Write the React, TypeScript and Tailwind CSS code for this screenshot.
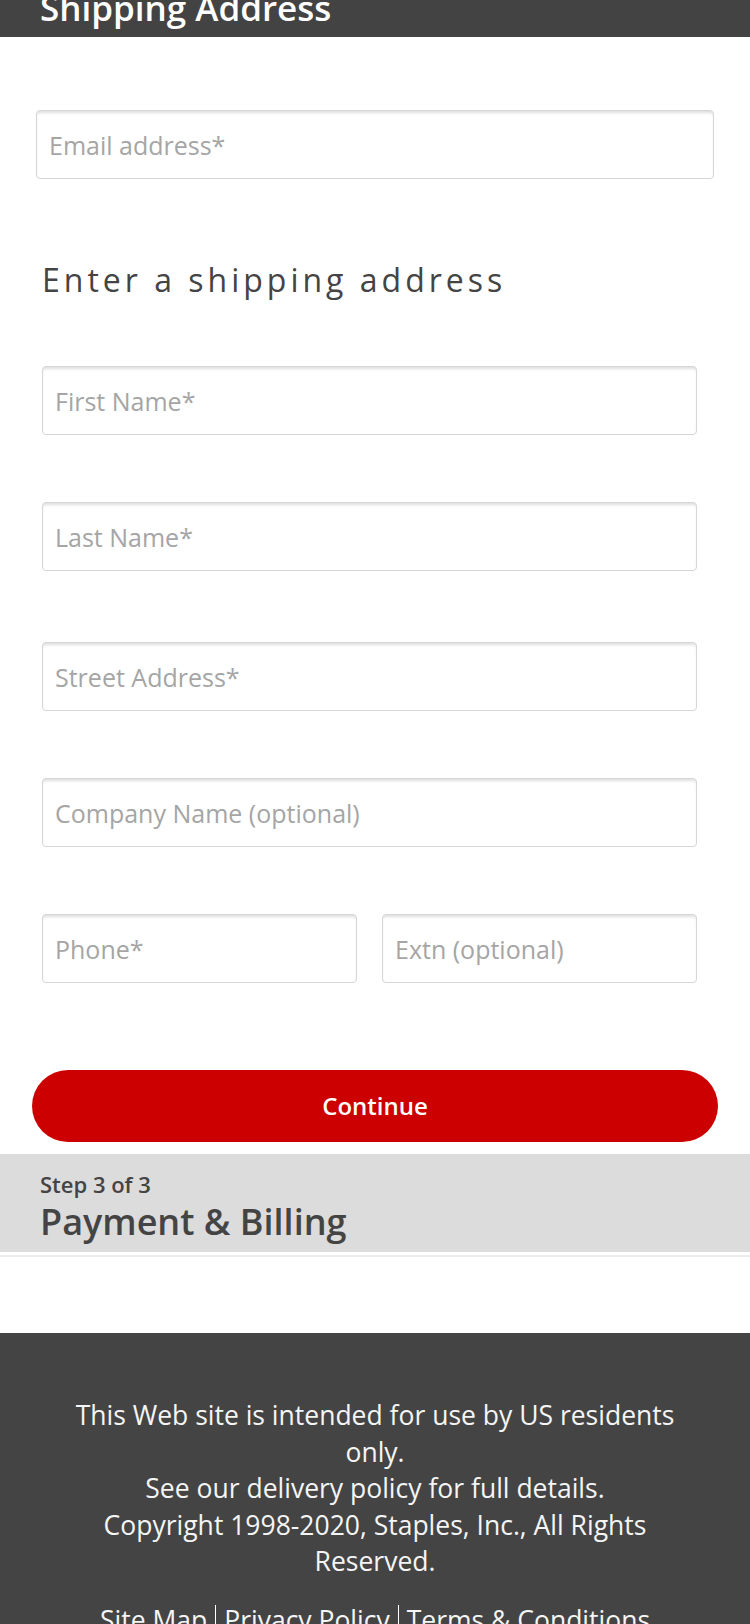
const font = { fontFamily: '"Open Sans", "Noto Sans", sans-serif' };

const Field = ({ placeholder, className = "" }: { placeholder: string; className?: string }) => (
  <input
    placeholder={placeholder}
    className={`h-[69px] w-full rounded-[4px] border border-[#d6d6d6] bg-white px-3 text-[25px] text-[#333] placeholder:text-[#a5a5a5] shadow-[inset_0_3px_3px_-1px_rgba(0,0,0,0.13)] outline-none ${className}`}
  />
);

export default function App() {
  return (
    <div className="w-[750px] min-h-[1624px] bg-white" style={font}>
      <div className="h-[37px] overflow-hidden bg-[#434343] px-[40px]">
        <h1 className="mt-[-10px] text-[35px] leading-none font-semibold text-white">Shipping Address</h1>
      </div>

      <div className="px-[36px] pt-[73px]">
        <Field placeholder="Email address*" />
      </div>

      <div className="pl-[42px] pr-[53px]">
        <h2 className="mt-[81px] text-[32px] leading-[40px] tracking-[4px] text-[#444]">Enter a shipping address</h2>
        <div className="mt-[66px] flex flex-col gap-[67px]">
          <Field placeholder="First Name*" />
          <Field placeholder="Last Name*" className="mb-[4px]" />
          <Field placeholder="Street Address*" />
          <Field placeholder="Company Name (optional)" />
          <div className="grid grid-cols-2 gap-[25px]">
            <Field placeholder="Phone*" />
            <Field placeholder="Extn (optional)" />
          </div>
        </div>
      </div>

      <div className="px-[32px] pt-[87px]">
        <button className="h-[72px] w-full rounded-full bg-[#cc0000] text-[24px] font-semibold text-white">Continue</button>
      </div>

      <div className="mt-[12px] border-b-[3px] border-white bg-[#dcdcdc] px-[40px] pt-[16px] pb-[6px]">
        <p className="text-[22px] leading-[28px] font-semibold text-[#444]">Step 3 of 3</p>
        <p className="text-[36px] leading-[48px] font-semibold text-[#444]">Payment &amp; Billing</p>
      </div>
      <div className="h-[2px] bg-[#ececec]" />

      <footer className="mt-[76px] bg-[#444444] px-[65px] pt-[64px] pb-[40px] text-center text-[26.5px] leading-[36.5px] text-[#f5f5f5]">
        <p>This Web site is intended for use by US residents only.</p>
        <p>See our delivery policy for full details.</p>
        <p>Copyright 1998-2020, Staples, Inc., All Rights Reserved.</p>
        <div className="mt-[22px] flex items-center justify-center">
          <span className="pr-2">Site Map</span>
          <span className="h-[30px] w-px bg-white" />
          <span className="px-2">Privacy Policy</span>
          <span className="h-[30px] w-px bg-white" />
          <span className="pl-2">Terms &amp; Conditions</span>
        </div>
      </footer>
    </div>
  );
}
